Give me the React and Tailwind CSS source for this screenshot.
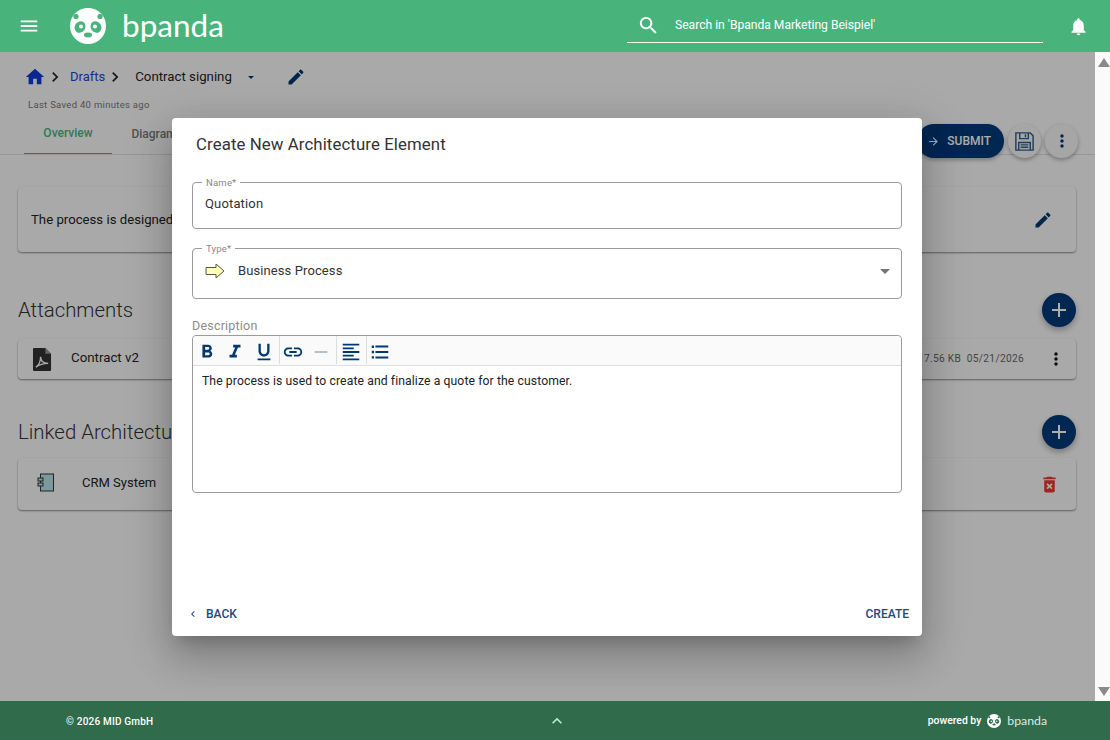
import React from "react";

const Icon = ({ d, className }) => (
  <svg viewBox="0 0 24 24" className={className} fill="currentColor">
    <path d={d} />
  </svg>
);

const paths = {
  menu: "M3 18h18v-2H3v2zm0-5h18v-2H3v2zm0-7v2h18V6H3z",
  search:
    "M15.5 14h-.79l-.28-.27C15.41 12.59 16 11.11 16 9.5 16 5.91 13.09 3 9.5 3S3 5.91 3 9.5 5.91 16 9.5 16c1.61 0 3.09-.59 4.23-1.57l.27.28v.79l5 4.99L20.49 19l-4.99-5zm-6 0C7.01 14 5 11.99 5 9.5S7.01 5 9.5 5 14 7.01 14 9.5 11.99 14 9.5 14z",
  bell: "M12 22c1.1 0 2-.9 2-2h-4c0 1.1.89 2 2 2zm6-6v-5c0-3.07-1.64-5.64-4.5-6.32V4c0-.83-.67-1.5-1.5-1.5s-1.5.67-1.5 1.5v.68C7.63 5.36 6 7.92 6 11v5l-2 2v1h16v-1l-2-2z",
  home: "M10 20v-6h4v6h5v-8h3L12 3 2 12h3v8z",
  chevron: "M10 6L8.59 7.41 13.17 12l-4.58 4.59L10 18l6-6z",
  chevronLeft: "M15.41 7.41L14 6l-6 6 6 6 1.41-1.41L10.83 12z",
  up: "M7.41 15.41L12 10.83l4.59 4.58L18 14l-6-6-6 6z",
  edit: "M3 17.25V21h3.75L17.81 9.94l-3.75-3.75L3 17.25zM20.71 7.04c.39-.39.39-1.02 0-1.41l-2.34-2.34c-.39-.39-1.02-.39-1.41 0l-1.83 1.83 3.75 3.75 1.83-1.83z",
  arrow: "M12 4l-1.41 1.41L16.17 11H4v2h12.17l-5.58 5.59L12 20l8-8z",
  more: "M12 8c1.1 0 2-.9 2-2s-.9-2-2-2-2 .9-2 2 .9 2 2 2zm0 2c-1.1 0-2 .9-2 2s.9 2 2 2 2-.9 2-2-.9-2-2-2zm0 6c-1.1 0-2 .9-2 2s.9 2 2 2 2-.9 2-2-.9-2-2-2z",
  add: "M19 13h-6v6h-2v-6H5v-2h6V5h2v6h6v2z",
  trash:
    "M6 19c0 1.1.9 2 2 2h8c1.1 0 2-.9 2-2V7H6v12zm2.46-7.12l1.41-1.41L12 12.59l2.12-2.12 1.41 1.41L13.41 14l2.12 2.12-1.41 1.41L12 15.41l-2.12 2.12-1.41-1.41L10.59 14l-2.13-2.12zM15.5 4l-1-1h-5l-1 1H5v2h14V4z",
  bold: "M15.6 10.79c.97-.67 1.65-1.77 1.65-2.79 0-2.26-1.75-4-4-4H7v14h7.04c2.09 0 3.71-1.7 3.71-3.79 0-1.52-.86-2.82-2.15-3.42zM10 6.5h3c.83 0 1.5.67 1.5 1.5s-.67 1.5-1.5 1.5h-3v-3zm3.5 9H10v-3h3.5c.83 0 1.5.67 1.5 1.5s-.67 1.5-1.5 1.5z",
  italic: "M10 4v3h2.21l-3.42 8H6v3h8v-3h-2.21l3.42-8H18V4z",
  underline:
    "M12 17c3.31 0 6-2.69 6-6V3h-2.5v8c0 1.93-1.57 3.5-3.5 3.5S8.5 12.93 8.5 11V3H6v8c0 3.31 2.69 6 6 6zm-7 2v2h14v-2H5z",
  link: "M3.9 12c0-1.71 1.39-3.1 3.1-3.1h4V7H7c-2.76 0-5 2.24-5 5s2.24 5 5 5h4v-1.9H7c-1.71 0-3.1-1.39-3.1-3.1zM8 13h8v-2H8v2zm9-6h-4v1.9h4c1.71 0 3.1 1.39 3.1 3.1s-1.39 3.1-3.1 3.1h-4V17h4c2.76 0 5-2.24 5-5s-2.24-5-5-5z",
  minus: "M19 13H5v-2h14v2z",
  alignLeft:
    "M15 15H3v2h12v-2zm0-8H3v2h12V7zM3 13h18v-2H3v2zm0 8h18v-2H3v2zM3 3v2h18V3H3z",
  list: "M3 5h2.5v2.5H3zM3 10.75h2.5v2.5H3zM3 16.5h2.5V19H3zM7 19h14v-2H7v2zm0-6h14v-2H7v2zm0-8v2h14V5H7z",
};

const Panda = ({ className, patch }) => (
  <svg viewBox="0 0 36 36" className={className}>
    <circle cx="18" cy="18" r="18" fill="#fff" />
    <circle cx="6" cy="8.5" r="2.6" fill={patch} />
    <circle cx="30" cy="8.5" r="2.6" fill={patch} />
    <ellipse cx="10" cy="19" rx="5.2" ry="6" transform="rotate(35 10 19)" fill={patch} />
    <ellipse cx="26" cy="19" rx="5.2" ry="6" transform="rotate(-35 26 19)" fill={patch} />
    <circle cx="11" cy="18.5" r="2" fill="#fff" />
    <circle cx="25" cy="18.5" r="2" fill="#fff" />
    <ellipse cx="18" cy="27" rx="4" ry="2.4" fill={patch} />
  </svg>
);

const Header = () => (
  <header className="h-[52px] shrink-0 bg-[#48b47c] flex items-center text-white">
    <Icon d={paths.menu} className="w-[22px] h-[22px] ml-[18px]" />
    <Panda className="w-9 h-9 ml-[30px]" patch="#48b47c" />
    <span className="ml-[16px] text-[31.5px] leading-none font-['Lato',sans-serif]">bpanda</span>
    <div className="ml-auto w-[416px] h-[42px] self-start mt-px border-b border-white flex items-center pt-[8px]">
      <Icon d={paths.search} className="w-[23px] h-[23px] ml-[10px]" />
      <span className="ml-[15px] text-[12.1px]">Search in 'Bpanda Marketing Beispiel'</span>
    </div>
    <Icon d={paths.bell} className="w-[21px] h-[21px] ml-[25px] mr-[21px]" />
  </header>
);

const Card = ({ className, children }) => (
  <div className={"bg-[#fafafa] rounded-[4px] flex items-center shadow-[0_1px_2px_rgba(0,0,0,0.45)] " + className}>{children}</div>
);

const SectionTitle = ({ children }) => (
  <div className="flex items-center h-[44px]">
    <h2 className="text-[20.4px] font-light text-[#333]">{children}</h2>
    <button className="ml-auto w-[34px] h-[34px] rounded-full bg-[#00387a] text-white flex items-center justify-center shadow-[0_3px_6px_rgba(0,0,0,0.3)]">
      <Icon d={paths.add} className="w-6 h-6" />
    </button>
  </div>
);

const Background = () => (
  <div className="h-full">
    <div className="px-[24px] pt-[13px] h-[103px] border-b border-[#ddd] flex flex-col">
      <div className="flex items-center h-[24px]">
        <Icon d={paths.home} className="w-[22px] h-[22px] text-[#1038d8]" />
        <Icon d={paths.chevron} className="w-5 h-5 text-[#222] ml-[-1px]" />
        <span className="text-[13px] text-[#1a45d0] ml-[5px]">Drafts</span>
        <Icon d={paths.chevron} className="w-5 h-5 text-[#222]" />
        <span className="text-[13.25px] text-[#222] ml-[10px]">Contract signing</span>
        <span className="ml-[16px] w-0 h-0 border-x-[3.5px] border-x-transparent border-t-[3.5px] border-t-[#003870]" />
        <Icon d={paths.edit} className="w-[20px] h-[20px] text-[#003870] ml-[32px]" />
      </div>
      <p className="text-[9.5px] leading-[14px] tracking-[0.3px] text-[#777] mt-[9px] ml-[4px]">Last Saved 40 minutes ago</p>
      <div className="flex items-end mt-auto h-[40px]">
        <div className="w-[88px] h-[40px] pb-[1px] flex items-center justify-center text-[12px] font-medium text-[#48b47c] border-b border-[#48b47c]">Overview</div>
        <div className="w-[84px] h-[40px] pb-[1px] flex items-center justify-center text-[12px] font-medium text-[#777]">Diagram</div>
        <div className="ml-auto flex items-center gap-[4px] mr-[-7px] mb-[-4px]">
          <button className="w-[87px] h-[34px] rounded-full bg-[#00387a] text-white text-[12px] font-medium flex items-center justify-end pr-[13px] gap-[7px] shadow-[0_2px_4px_rgba(0,0,0,0.3)]">
            <Icon d={paths.arrow} className="w-[13px] h-[13px]" />SUBMIT
          </button>
          <button className="w-[33px] h-[34px] rounded-full bg-[#f5f5f5] flex items-center justify-center shadow-[0_2px_4px_rgba(0,0,0,0.3)]">
            <svg viewBox="0 0 24 24" className="w-[23px] h-[23px]" fill="none" stroke="#2f5c85" strokeWidth="1.5">
              <path d="M3 3h15l3 3v15H3z" />
              <path d="M7 3v6h9V3M13 4.5v3M6 21v-8h12v8M8 15.5h8M8 18h8" />
            </svg>
          </button>
          <button className="w-[33px] h-[34px] rounded-full bg-[#f5f5f5] flex items-center justify-center shadow-[0_2px_4px_rgba(0,0,0,0.3)]">
            <Icon d={paths.more} className="w-5 h-5 text-[#003870]" />
          </button>
        </div>
      </div>
    </div>
    <div className="pl-[18px] pr-[19px] pt-[32px]">
      <Card className="h-[65px] pl-[13px] pr-[23px] justify-between">
        <span className="text-[13.2px] text-[#222]">The process is designed to manage contract signing from start to finish.</span>
        <Icon d={paths.edit} className="w-[20px] h-[20px] text-[#003870]" />
      </Card>
      <div className="mt-[36px]"><SectionTitle>Attachments</SectionTitle></div>
      <Card className="h-[40px] mt-[7px] pr-[10px]">
        <svg viewBox="0 0 20 24" className="w-[19px] h-[23px] ml-[15px]">
          <path d="M1 0h12l6 6v17a1 1 0 0 1-1 1H1a1 1 0 0 1-1-1V1a1 1 0 0 1 1-1z" fill="#333" />
          <path d="M13 0l6 6h-6z" fill="#999" />
          <path d="M3 20c3-2 5-6 5-11 0 5 3 7 8 7-5 0-9 1-13 4z" fill="none" stroke="#fff" strokeWidth="1.4" />
        </svg>
        <span className="text-[13.3px] text-[#222] ml-[19px] mb-[2px]">Contract v2</span>
        <span className="ml-auto text-[10.2px] tracking-[0.3px] text-[#666]">17.56 KB&nbsp;&nbsp;05/21/2026</span>
        <Icon d={paths.more} className="w-5 h-5 text-[#111] ml-[22px]" />
      </Card>
      <div className="mt-[31px]"><SectionTitle>Linked Architecture Elements</SectionTitle></div>
      <Card className="h-[52px] mt-[4px] pr-[16px]">
        <svg viewBox="0 0 18 20" className="w-[18px] h-[20px] ml-[19px] mb-[3px]">
          <rect x="3.5" y="1" width="13" height="17" fill="#b7e2e8" stroke="#333" strokeWidth="1" />
          <rect x="1" y="5" width="5" height="3" fill="#b7e2e8" stroke="#333" strokeWidth="1" />
          <rect x="1" y="10" width="5" height="3" fill="#b7e2e8" stroke="#333" strokeWidth="1" />
        </svg>
        <span className="text-[13px] text-[#222] ml-[27px] mb-[2px]">CRM System</span>
        <Icon d={paths.trash} className="w-[21px] h-[21px] ml-auto text-[#e83a2a]" />
      </Card>
    </div>
  </div>
);

const Field = ({ label, className, children }) => (
  <div className={"relative border border-[#9b9b9b] rounded-[4px] flex items-center " + className}>
    <span className="absolute left-[9px] top-[-6px] bg-white px-[4px] text-[9.5px] leading-[11px] tracking-[0.2px] text-[#888]">{label}</span>
    {children}
  </div>
);

const Sep = () => <span className="w-px h-[28px] bg-[#ddd]" />;

const Toolbar = () => (
  <div className="h-[30px] bg-[#fafafa] border-b border-[#ddd] rounded-t-[4px] flex items-center text-[#003870]">
    <Icon d={paths.bold} className="w-[22px] h-[22px] ml-[3px] mt-[4px]" />
    <Icon d={paths.italic} className="w-[22px] h-[22px] ml-[6px] mt-[4px]" />
    <Icon d={paths.underline} className="w-[22px] h-[22px] ml-[7px] mr-[4px] mt-[4px]" />
    <Sep />
    <Icon d={paths.link} className="w-[22px] h-[22px] ml-[2px] mt-[4px]" />
    <Icon d={paths.minus} className="w-[22px] h-[22px] ml-[6px] mr-[4px] mt-[4px] text-[#a9bac9]" />
    <Sep />
    <Icon d={paths.alignLeft} className="w-[22px] h-[22px] ml-[3px] mr-[4px] mt-[4px]" />
    <Sep />
    <Icon d={paths.list} className="w-[22px] h-[22px] ml-[2px] mt-[4px]" />
  </div>
);

const Dialog = () => (
  <div className="w-[750px] h-[518px] mr-px bg-white rounded-[4px] flex flex-col shadow-[0_11px_15px_-7px_rgba(0,0,0,0.2),0_24px_38px_3px_rgba(0,0,0,0.14),0_9px_46px_8px_rgba(0,0,0,0.12)]">
    <h1 className="text-[16.8px] leading-[20px] text-[#333] mt-[16px] ml-[24px] tracking-[0.1px]">Create New Architecture Element</h1>
    <div className="px-[20px] mt-[28px] flex-1">
      <Field label="Name*" className="h-[47px]">
        <span className="ml-[12px] text-[13px] tracking-[0.15px] text-[#333] mb-[2px]">Quotation</span>
      </Field>
      <Field label="Type*" className="h-[51px] mt-[19px]">
        <svg viewBox="0 0 20 16" className="w-[20px] h-[16px] ml-[12px] mb-[5px]">
          <path d="M1 4.5h10V1l8 7-8 7v-3.5H1z" fill="#ffffb5" stroke="#555" strokeWidth="1" />
        </svg>
        <span className="ml-[13px] text-[13px] tracking-[0.1px] text-[#333] mb-[5px]">Business Process</span>
        <span className="ml-auto mr-[11px] mb-[3px] w-0 h-0 border-x-[5px] border-x-transparent border-t-[5px] border-t-[#757575]" />
      </Field>
      <p className="text-[12.5px] leading-[14px] tracking-[0.2px] text-[#8c8c8c] mt-[20px]">Description</p>
      <div className="border border-[#9b9b9b] rounded-[4px] h-[158px] mt-[2px]">
        <Toolbar />
        <p className="text-[12.2px] tracking-[0.1px] text-[#222] ml-[9px] mt-[6px]">The process is used to create and finalize a quote for the customer.</p>
      </div>
    </div>
    <div className="h-[46px] pt-[2px] flex items-center text-[#1a4a78] text-[12px] font-medium">
      <Icon d={paths.chevronLeft} className="w-[12px] h-[12px] ml-[15px]" />
      <span className="ml-[7px]">BACK</span>
      <span className="ml-auto mr-[13px]">CREATE</span>
    </div>
  </div>
);

const Footer = () => (
  <footer className="h-[39px] shrink-0 pt-[1px] bg-[#306c4c] flex items-center text-white">
    <span className="ml-[66px] text-[10px] font-medium tracking-[0.2px]">© 2026 MID GmbH</span>
    <Icon d={paths.up} className="w-[20px] h-[20px] ml-[394px] text-[#b5f0d0]" />
    <span className="ml-auto text-[10.4px] font-medium">powered by</span>
    <Panda className="w-[14px] h-[14px] ml-[6px]" patch="#306c4c" />
    <span className="ml-[6px] text-[12.3px] text-[#dfe9e3] font-['Lato',sans-serif] mr-[63px]">bpanda</span>
  </footer>
);

const Scrollbar = () => (
  <div className="w-[15px] shrink-0 bg-[#fafafa] flex flex-col items-center justify-between pl-[2px] pt-[6px] pb-[5px]">
    <span className="w-0 h-0 border-x-[6px] border-x-transparent border-b-[9px] border-b-[#8a8a8a]" />
    <span className="w-0 h-0 border-x-[6px] border-x-transparent border-t-[9px] border-t-[#8a8a8a]" />
  </div>
);

export default function App() {
  return (
    <div className="w-[1110px] h-[740px] flex flex-col overflow-hidden bg-[#fafafa] font-['Roboto',sans-serif]">
      <Header />
      <div className="flex-1 flex min-h-0">
        <main className="flex-1 relative overflow-hidden">
          <Background />
          <div className="absolute inset-0 bg-black/[0.32] flex items-center justify-center">
            <Dialog />
          </div>
        </main>
        <Scrollbar />
      </div>
      <Footer />
    </div>
  );
}
